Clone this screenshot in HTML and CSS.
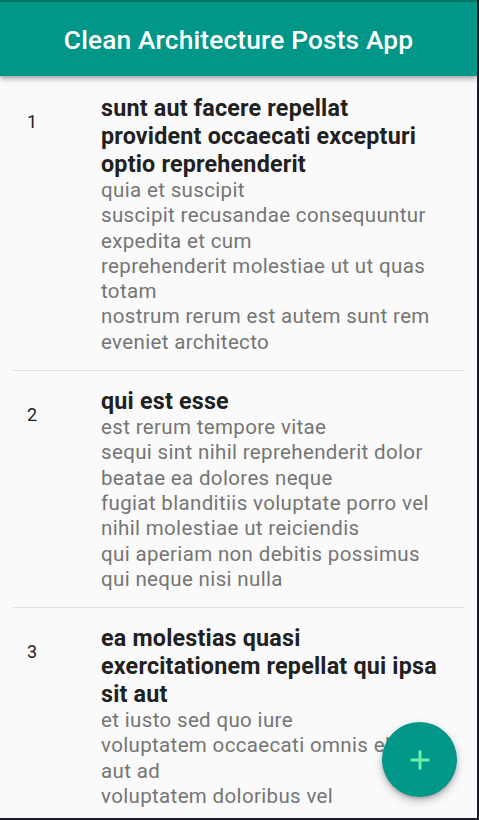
FILE: index.html
```html
<!DOCTYPE html>
<html>
<head>
<meta charset="utf-8">
<link rel="stylesheet" href="styles.css">
</head>
<body>
<div class="frame">
  <div class="status"></div>
  <header class="appbar">
    <h1 class="appbar-title">Clean Architecture Posts App</h1>
  </header>
  <main class="list">
    <div class="tile">
      <div class="lead">1</div>
      <div class="body">
        <div class="title">sunt aut facere repellat provident occaecati excepturi optio reprehenderit</div>
        <div class="subtitle">quia et suscipit
suscipit recusandae consequuntur expedita et cum
reprehenderit molestiae ut ut quas totam
nostrum rerum est autem sunt rem eveniet architecto</div>
      </div>
    </div>
    <div class="divider"></div>
    <div class="tile">
      <div class="lead">2</div>
      <div class="body">
        <div class="title">qui est esse</div>
        <div class="subtitle">est rerum tempore vitae
sequi sint nihil reprehenderit dolor beatae ea dolores neque
fugiat blanditiis voluptate porro vel nihil molestiae ut reiciendis
qui aperiam non debitis possimus qui neque nisi nulla</div>
      </div>
    </div>
    <div class="divider"></div>
    <div class="tile">
      <div class="lead">3</div>
      <div class="body">
        <div class="title">ea molestias quasi exercitationem repellat qui ipsa sit aut</div>
        <div class="subtitle">et iusto sed quo iure
voluptatem occaecati omnis eligendi aut ad
voluptatem doloribus vel</div>
      </div>
    </div>
  </main>
  <button class="fab" aria-label="Add">
    <svg width="22" height="22" viewBox="0 0 22 22"><path d="M11 1.5V20.5M1.5 11H20.5" stroke="#69f0ae" stroke-width="3" fill="none"/></svg>
  </button>
</div>
</body>
</html>
```
FILE: styles.css
```css
* { box-sizing: border-box; }
html, body { margin: 0; padding: 0; background: #1c1b2d; }
body { width: 479px; height: 820px; overflow: hidden; font-family: Roboto, "Noto Sans", sans-serif; }
.frame {
  position: relative;
  width: 477px;
  height: 818px;
  background: #fafafa;
  overflow: hidden;
  display: flex;
  flex-direction: column;
}
.status { height: 2px; background: #00786b; flex: none; }
.appbar {
  flex: none;
  height: 74px;
  background: #009688;
  display: flex;
  align-items: center;
  justify-content: center;
  box-shadow: 0 3px 6px rgba(0,0,0,0.28), 0 1px 3px rgba(0,0,0,0.15);
  position: relative;
  z-index: 2;
}
.appbar-title {
  margin: 0;
  color: #fff;
  font-size: 26.3px;
  font-weight: 500;
  letter-spacing: 0.15px;
  padding-top: 2px;
}
.list { flex: 1; overflow: hidden; padding: 2px 12px 0 13px; }
.tile {
  display: flex;
  padding: 16px 15px 15px 14px;
}
.lead {
  width: 74px;
  flex: none;
  font-size: 18px;
  line-height: 22px;
  color: #212121;
  padding-top: 17px;
}
.body { flex: 1; min-width: 0; }
.title {
  font-size: 23.3px;
  line-height: 28px;
  font-weight: 700;
  letter-spacing: 0.2px;
  color: #212121;
}
.subtitle {
  font-size: 20.5px;
  line-height: 25.3px;
  letter-spacing: 0.35px;
  color: #757575;
  white-space: pre-line;
}
.divider { height: 1px; background: #e0e0e0; }
.fab {
  position: absolute;
  right: 20px;
  bottom: 21px;
  width: 75px;
  height: 75px;
  border-radius: 50%;
  border: none;
  background: #009688;
  display: flex;
  align-items: center;
  justify-content: center;
  box-shadow: 0 4px 8px rgba(0,0,0,0.25), 0 2px 3px rgba(0,0,0,0.15);
  padding: 0;
}
```
